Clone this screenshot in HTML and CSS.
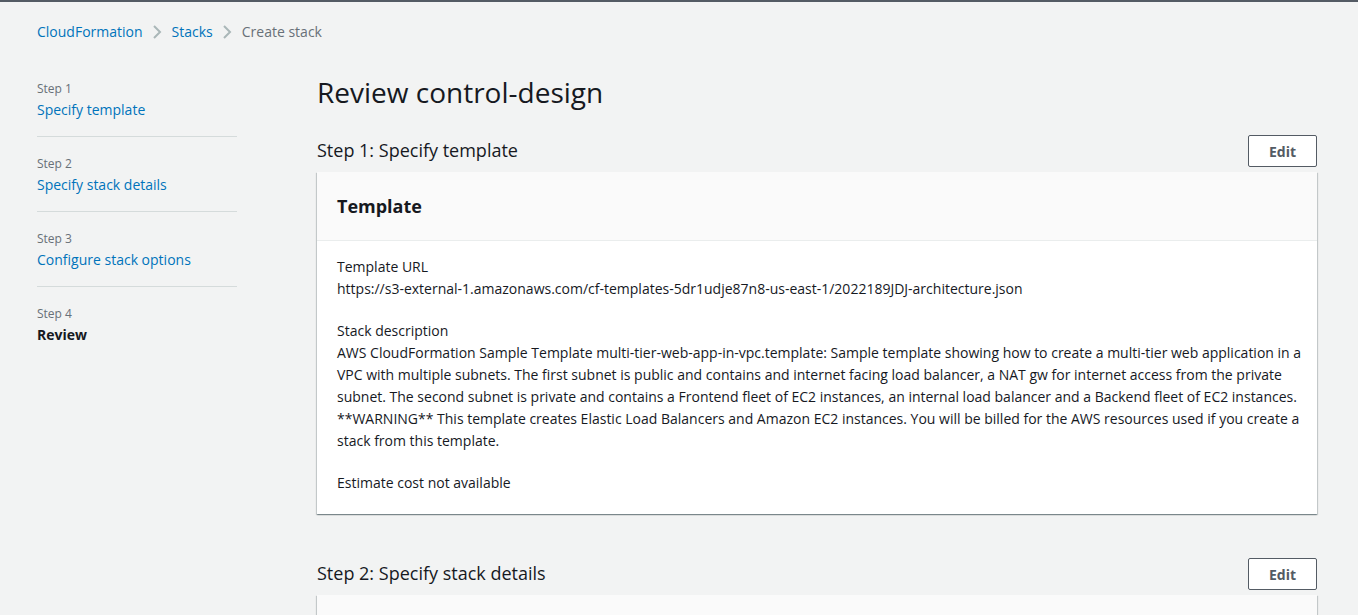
FILE: index.html
```html
<!DOCTYPE html>
<html lang="en">
<head>
<meta charset="utf-8">
<title>Review control-design</title>
<link rel="stylesheet" href="styles.css">
</head>
<body>
<div class="topline"></div>
<div class="page">
  <nav class="breadcrumbs">
    <a class="crumb" href="#">CloudFormation</a>
    <svg class="chev" viewBox="0 0 16 16" width="16" height="16"><path d="M5 2l6 6-6 6" fill="none" stroke="#aab7b8" stroke-width="2"/></svg>
    <a class="crumb" href="#">Stacks</a>
    <svg class="chev" viewBox="0 0 16 16" width="16" height="16"><path d="M5 2l6 6-6 6" fill="none" stroke="#aab7b8" stroke-width="2"/></svg>
    <span class="crumb-current">Create stack</span>
  </nav>
  <div class="layout">
    <ul class="steps">
      <li class="step"><div class="step-label">Step 1</div><a class="step-link" href="#">Specify template</a></li>
      <li class="step"><div class="step-label">Step 2</div><a class="step-link" href="#">Specify stack details</a></li>
      <li class="step"><div class="step-label">Step 3</div><a class="step-link" href="#">Configure stack options</a></li>
      <li class="step last"><div class="step-label">Step 4</div><span class="step-active">Review</span></li>
    </ul>
    <main class="main">
      <h1 class="title">Review control-design</h1>
      <section class="section">
        <div class="section-head">
          <h2 class="section-title">Step 1: Specify template</h2>
          <button class="btn">Edit</button>
        </div>
        <div class="card">
          <div class="card-head"><h3 class="card-title">Template</h3></div>
          <div class="card-body">
            <div class="kv">
              <div class="k">Template URL</div>
              <div class="v">https://s3-external-1.amazonaws.com/cf-templates-5dr1udje87n8-us-east-1/2022189JDJ-architecture.json</div>
            </div>
            <div class="kv">
              <div class="k">Stack description</div>
              <div class="v">AWS CloudFormation Sample Template multi-tier-web-app-in-vpc.template: Sample template showing how to create a multi-tier web application in a VPC with multiple subnets. The first subnet is public and contains and internet facing load balancer, a NAT gw for internet access from the private subnet. The second subnet is private and contains a Frontend fleet of EC2 instances, an internal load balancer and a Backend fleet of EC2 instances. **WARNING** This template creates Elastic Load Balancers and Amazon EC2 instances. You will be billed for the AWS resources used if you create a stack from this template.</div>
            </div>
            <div class="kv">
              <div class="k">Estimate cost not available</div>
            </div>
          </div>
        </div>
      </section>
      <section class="section second">
        <div class="section-head">
          <h2 class="section-title">Step 2: Specify stack details</h2>
          <button class="btn">Edit</button>
        </div>
        <div class="card">
          <div class="card-head empty"></div>
        </div>
      </section>
    </main>
  </div>
</div>
</body>
</html>
```
FILE: styles.css
```css
* { box-sizing: border-box; }
html, body { margin: 0; padding: 0; }
body {
  background: #f2f3f3;
  font-family: "Open Sans", "Noto Sans", "Liberation Sans", sans-serif;
  font-size: 14px;
  line-height: 22px;
  color: #16191f;
  overflow: hidden;
  height: 615px;
}
.topline { height: 2px; background: #545b64; }
.page { padding: 0 41px 0 37px; }
.breadcrumbs {
  display: flex;
  align-items: center;
  padding-top: 19px;
  height: 41px;
}
.crumb { color: #0073bb; text-decoration: none; }
.crumb-current { color: #687078; }
.chev { margin: 0 7px 0 6px; display: block; }
.layout {
  display: grid;
  grid-template-columns: 200px 1000px;
  column-gap: 80px;
  padding-top: 18px;
}
.steps { list-style: none; margin: 0; padding: 0; padding-top: 20px; }
.step {
  padding: 19px 0 15px;
  border-bottom: 1px solid #d5dbdb;
}
.step:first-child { padding-top: 0; }
.step.last { border-bottom: none; }
.step-label { color: #687078; font-size: 12px; line-height: 16px; }
.step-link, .step-active {
  display: block;
  margin-top: 2px;
  line-height: 22px;
  color: #0073bb;
  text-decoration: none;
}
.step-active { color: #16191f; font-weight: 700; }
.main { padding-top: 13px; }
.title {
  margin: 0;
  font-size: 28px;
  line-height: 36px;
  font-weight: 400;
}
.section { margin-top: 25px; }
.section.second { margin-top: 44px; }
.section-head {
  display: flex;
  justify-content: space-between;
  align-items: center;
  height: 32px;
  margin-bottom: 5px;
}
.section-title {
  margin: 0;
  font-size: 18px;
  line-height: 22px;
  font-weight: 400;
  position: relative;
  top: -1px;
}
.btn {
  width: 69px;
  height: 32px;
  background: #fff;
  border: 1px solid #545b64;
  border-radius: 2px;
  color: #545b64;
  font-family: inherit;
  font-size: 14px;
  font-weight: 700;
  padding: 0;
}
.card {
  background: #fff;
  box-shadow: 0 1px 1px 0 rgba(0,28,36,.3), 1px 1px 1px 0 rgba(0,28,36,.15), -1px 1px 1px 0 rgba(0,28,36,.15);
}
.card-head {
  background: #fafafa;
  border-bottom: 1px solid #eaeded;
  padding: 23px 20px;
}
.card-head.empty { height: 68px; }
.card-title {
  margin: 0;
  font-size: 18px;
  line-height: 22px;
  font-weight: 700;
}
.card-body { padding: 15px 14px 20px 20px; }
.kv + .kv { margin-top: 20px; }
```
